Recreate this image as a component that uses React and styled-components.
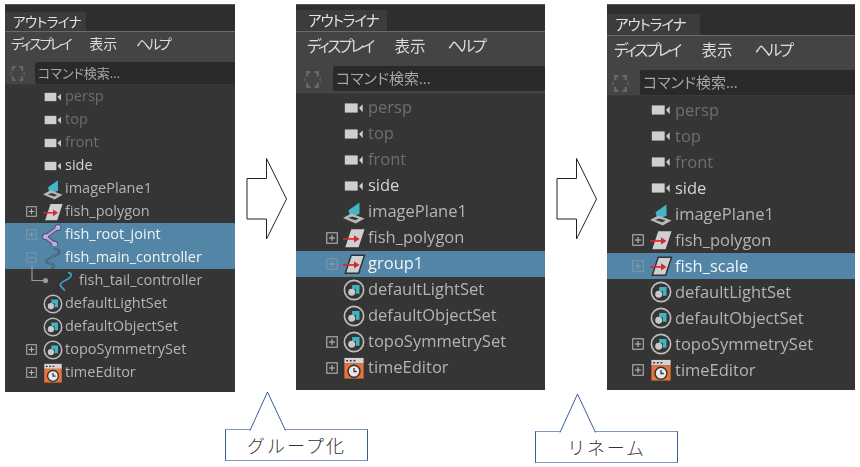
import React from 'react';
import styled, { createGlobalStyle } from 'styled-components';

const GlobalStyle = createGlobalStyle`
    html, body { margin: 0; padding: 0; background: #fff; }
    body { font-family: "Open Sans", "Noto Sans CJK JP", sans-serif; }
`;

const Page = styled.div`
    width: 860px;
    height: 467px;
    overflow: hidden;
`;

const TopRow = styled.div`
    display: flex;
    align-items: flex-start;
    height: 388px;
    padding: 4px 0 0 5px;
`;

const Panel = styled.div`
    flex: none;
    width: ${p => p.$width}px;
    height: ${p => p.$height}px;
    background: #353535;
    border-top: 1px solid #555;
    box-sizing: border-box;
    overflow: hidden;
    filter: blur(0.35px);
`;

const TabBar = styled.div`
    height: ${p => p.$height}px;
    display: flex;
    align-items: flex-end;
    background: #2e2e2e;
    border-bottom: 1px solid #6a6a6a;
`;

const Tab = styled.div`
    width: ${p => p.$width}px;
    height: ${p => p.$height}px;
    line-height: ${p => p.$line}px;
    padding-left: ${p => p.$inset}px;
    box-sizing: border-box;
    background: #3c3c3c;
    color: #e2e2e2;
    font-size: ${p => p.$font}px;
    letter-spacing: ${p => p.$kern}px;
    font-feature-settings: "palt";
    white-space: nowrap;
`;

const MenuBar = styled.div`
    height: ${p => p.$height}px;
    display: flex;
    align-items: center;
    padding-left: ${p => p.$inset}px;
    gap: ${p => p.$gap}px;
    background: #444;
    color: #dcdcdc;
    font-size: ${p => p.$font}px;
    font-feature-settings: "palt";
    white-space: nowrap;
`;

const Kana = styled.span`
    letter-spacing: -0.165em;
`;

const SearchRow = styled.div`
    height: ${p => p.$height}px;
    display: flex;
    align-items: flex-end;
    box-sizing: content-box;
    background: #444;
    border-bottom: 1px solid #3a3a3a;
`;

const SearchHandle = styled.svg`
    flex: none;
    width: ${p => p.$size}px;
    height: ${p => p.$size}px;
    margin: 0 ${p => p.$right}px ${p => p.$pad + 2}px ${p => p.$left}px;
`;

const SearchInput = styled.div`
    flex: 1;
    height: ${p => p.$height}px;
    line-height: ${p => p.$height}px;
    margin-bottom: ${p => p.$pad}px;
    padding-left: 3px;
    background: #2a2a2a;
    border-radius: 2px 0 0 2px;
    color: #a6a6a6;
    font-size: ${p => p.$font}px;
    font-feature-settings: "palt";
    white-space: nowrap;
`;

const List = styled.div`
    padding-top: ${p => p.$top}px;
`;

const Row = styled.div`
    position: relative;
    height: ${p => p.$height}px;
    display: flex;
    align-items: center;
    background: ${p => (p.$selected ? '#5285a6' : 'transparent')};
`;

const ExpandSlot = styled.div`
    flex: none;
    width: ${p => p.$width}px;
    display: flex;
    justify-content: flex-end;
    padding-right: ${p => p.$gap}px;
    box-sizing: border-box;
`;

const ExpandBox = styled.svg`
    display: block;
    width: ${p => p.$size}px;
    height: ${p => p.$size}px;
    opacity: ${p => (p.$dim ? 0.45 : 1)};
`;

const IconSlot = styled.div`
    flex: none;
    width: ${p => p.$width}px;
    height: ${p => p.$width}px;
    margin-right: ${p => p.$gap}px;
    svg { display: block; width: 100%; height: 100%; overflow: visible; }
`;

const Label = styled.span`
    position: relative;
    top: ${p => p.$lift}px;
    font-size: ${p => p.$font}px;
    line-height: 1;
    white-space: nowrap;
    color: ${p => (p.$selected ? '#eef4f7' : p.$muted ? '#6e6e6e' : p.$bright ? '#d4d4d4' : '#b4b4b4')};
`;

const TreeLine = styled.svg`
    position: absolute;
    left: 26px;
    top: -4px;
    width: 26px;
    height: 26px;
    overflow: visible;
`;

const ArrowSlot = styled.div`
    flex: none;
    width: ${p => p.$width}px;
    padding: 153px 0 0 ${p => p.$left}px;
    box-sizing: border-box;
`;

const BlockArrow = styled.svg`
    display: block;
    width: 42px;
    height: 83px;
`;

const BottomRow = styled.div`
    display: flex;
    align-items: flex-start;
    margin-top: 37px;
    padding-left: 225px;
`;

const Callout = styled.div`
    position: relative;
    flex: none;
    width: 143px;
    height: 32px;
    box-sizing: border-box;
    margin: ${p => p.$top}px ${p => p.$right}px 0 0;
    border: 1px solid #8095c2;
    border-left-color: #3d5c99;
    border-right-color: #3d5c99;
    display: flex;
    align-items: center;
    justify-content: center;
    color: #333;
    font-family: "Noto Sans CJK JP", sans-serif;
    font-size: 18px;
    font-weight: 300;
    letter-spacing: ${p => p.$spacing}px;
`;

const CalloutTip = styled.svg`
    position: absolute;
    left: ${p => p.$left}px;
    bottom: calc(100% - 1px);
    width: 38px;
    height: 40px;
`;

const Camera = () => (
    <svg viewBox="0 0 24 24">
        <rect x="2" y="7" width="14" height="10" fill="#cfcfcf" />
        <path d="M17.5 12 L21.5 8 V16.5 Z" fill="#cfcfcf" />
    </svg>
);

const ImagePlane = () => (
    <svg viewBox="0 0 24 24">
        <path d="M6 10 L18 1.5 V14 L8 18 Z" fill="#45b4c4" />
        <path d="M0 18.5 L9 13.5 L23.5 19 L14 24.5 Z M6 18.5 L9.5 16.5 L17 19.2 L13.5 21 Z" fill="#b8b8b8" fillRule="evenodd" />
    </svg>
);

const Transform = ({ selected }) => (
    <svg viewBox="0 0 24 24">
        <path d="M9 2.5 H23.5 L17 22 H2.5 Z" fill="#d0d0d0" stroke={selected ? '#333' : 'none'} strokeWidth="1.6" />
        <path d="M0 13 H13" stroke="#d8272e" strokeWidth="1.8" />
        <path d="M12 9 L18 13 L12 17 Z" fill="#d8272e" />
    </svg>
);

const Joint = () => (
    <svg viewBox="0 0 24 24">
        <path d="M18 3 L3 14 L14 23" fill="none" stroke="#3d4f5c" strokeWidth="5" strokeLinecap="round" strokeLinejoin="round" />
        <circle cx="18" cy="3" r="4" fill="#3d4f5c" />
        <circle cx="14" cy="23" r="4" fill="#3d4f5c" />
        <circle cx="3" cy="14" r="4" fill="#3d4f5c" />
        <path d="M18 3 L3 14 L14 23" fill="none" stroke="#b79ae0" strokeWidth="3" strokeLinecap="round" strokeLinejoin="round" />
        <circle cx="18" cy="3" r="3" fill="#c2a8ea" />
        <circle cx="14" cy="23" r="3" fill="#c2a8ea" />
        <circle cx="3" cy="14" r="3" fill="#c2a8ea" />
    </svg>
);

const CURVE = 'M14 1 C19 2 22 5 17 8 C12 11 3 12 4 16 C5 19 13 18 13 21 C13 22.5 12 23.5 11 24';

const CurveSolid = () => (
    <svg viewBox="0 0 24 24">
        <path d={CURVE} fill="none" stroke="#2b4a5f" strokeWidth="2.4" strokeLinecap="round" />
        <path d={CURVE} fill="none" stroke="#8fb0c6" strokeWidth="0.8" strokeLinecap="round" />
    </svg>
);

const CurveBlue = () => (
    <svg viewBox="0 0 24 24">
        <path d="M14 2 C18 3 18 6 14 9 C9 12 3 14 4 17 C5 20 8 21 9 23" fill="none" stroke="#3e9ec4" strokeWidth="2.2" strokeLinecap="round" />
    </svg>
);

const SetIcon = () => (
    <svg viewBox="0 0 24 24">
        <circle cx="12" cy="12" r="10.5" fill="#353535" stroke="#bdbdbd" strokeWidth="1.8" />
        <path d="M10 6.5 H18 V16 H14 V11 H10 Z" fill="#3fb4c0" />
        <circle cx="9.5" cy="14.5" r="3.8" fill="#c8c8c8" />
    </svg>
);

const TimeIcon = () => (
    <svg viewBox="0 0 24 24">
        <rect x="1.5" y="1" width="21" height="6" fill="#d4d4d4" />
        <path d="M3.5 4 H5.5 M7.5 4 H9.5 M11.5 4 H13.5" stroke="#333" strokeWidth="1.6" />
        <rect x="1.5" y="7" width="21" height="16.5" fill="#e9733a" />
        <circle cx="12" cy="15.5" r="6.5" fill="#e8e8e8" stroke="#333" strokeWidth="1.6" />
        <path d="M12 12 V15.8 H15" fill="none" stroke="#333" strokeWidth="1.4" />
    </svg>
);

const ICONS = {
    camera: Camera,
    plane: ImagePlane,
    transform: Transform,
    joint: Joint,
    curve: CurveSolid,
    tail: CurveBlue,
    set: SetIcon,
    time: TimeIcon,
};

const groupRows = name => [
    { name: 'persp', icon: 'camera', muted: true },
    { name: 'top', icon: 'camera', muted: true },
    { name: 'front', icon: 'camera', muted: true },
    { name: 'side', icon: 'camera', bright: true },
    { name: 'imagePlane1', icon: 'plane' },
    { name: 'fish_polygon', icon: 'transform', box: '+' },
    { name, icon: 'transform', box: '+', selected: true },
    { name: 'defaultLightSet', icon: 'set' },
    { name: 'defaultObjectSet', icon: 'set' },
    { name: 'topoSymmetrySet', icon: 'set', box: '+' },
    { name: 'timeEditor', icon: 'time', box: '+' },
];

const firstRows = [
    { name: 'persp', icon: 'camera', muted: true },
    { name: 'top', icon: 'camera', muted: true },
    { name: 'front', icon: 'camera', muted: true },
    { name: 'side', icon: 'camera', bright: true },
    { name: 'imagePlane1', icon: 'plane' },
    { name: 'fish_polygon', icon: 'transform', box: '+' },
    { name: 'fish_root_joint', icon: 'joint', box: '+', selected: true },
    { name: 'fish_main_controller', icon: 'curve', box: '-', selected: true },
    { name: 'fish_tail_controller', icon: 'tail', child: true },
    { name: 'defaultLightSet', icon: 'set' },
    { name: 'defaultObjectSet', icon: 'set' },
    { name: 'topoSymmetrySet', icon: 'set', box: '+' },
    { name: 'timeEditor', icon: 'time', box: '+' },
];

const Expand = ({ type, size, dim }) => (
    <ExpandBox $size={size} $dim={dim} viewBox="0 0 12 12">
        <rect x="0.75" y="0.75" width="10.5" height="10.5" fill="none" stroke="#a8a8a8" strokeWidth="1.2" />
        <path d="M3 6 H9" stroke="#b4b4b4" strokeWidth="1.2" />
        {type === '+' && <path d="M6 3 V9" stroke="#b4b4b4" strokeWidth="1.2" />}
    </ExpandBox>
);

const Outliner = ({ c, rows }) => (
    <Panel $width={c.width} $height={c.height}>
        <TabBar $height={c.barH}>
            <Tab $width={c.tabW} $height={c.tabH} $line={c.tabLine} $inset={c.tabInset} $font={c.tabFont} $kern={c.tabKern}>アウトライナ</Tab>
        </TabBar>
        <MenuBar $height={c.menuH} $inset={c.menuInset} $gap={c.menuGap} $font={c.menuFont}>
            <Kana>ディスプレイ</Kana>
            <span>表示</span>
            <Kana>ヘルプ</Kana>
        </MenuBar>
        <SearchRow $height={c.searchH}>
            <SearchHandle $size={c.handle} $left={c.handleLeft} $right={c.handleRight} $pad={c.inputPad} viewBox="0 0 18 18">
                <path d="M3 1 H7 V3 H5 V6 H3 Z M11 1 H15 V6 H13 V3 H11 Z M3 12 H5 V15 H7 V17 H3 Z M13 12 H15 V17 H11 V15 H13 Z" fill="#6a6a6a" />
                <path d="M1 6 L3 9 L1 12 Z M17 6 L15 9 L17 12 Z" fill="#5c5c5c" />
            </SearchHandle>
            <SearchInput $height={c.inputH} $pad={c.inputPad} $font={c.searchFont}>コマンド検索...</SearchInput>
        </SearchRow>
        <List $top={c.listTop}>
            {rows.map(r => {
                const Icon = ICONS[r.icon];
                return (
                    <Row key={r.name} $height={c.rowH} $selected={r.selected}>
                        {r.child && (
                            <TreeLine viewBox="0 0 26 26">
                                <path d="M1 0 V15.5 H14" fill="none" stroke="#9a9a9a" strokeWidth="1.2" />
                                <circle cx="14.5" cy="15.5" r="2.6" fill="#9a9a9a" />
                            </TreeLine>
                        )}
                        <ExpandSlot $width={r.child ? c.slotW + 14 : c.slotW} $gap={c.slotGap}>
                            {r.box && <Expand type={r.box} size={c.box} dim={r.selected} />}
                        </ExpandSlot>
                        <IconSlot $width={c.icon} $gap={c.iconGap}>
                            <Icon selected={r.selected} />
                        </IconSlot>
                        <Label $font={c.font} $lift={c.lift} $selected={r.selected} $muted={r.muted} $bright={r.bright}>{r.name}</Label>
                    </Row>
                );
            })}
        </List>
    </Panel>
);

const first = {
    width: 230, height: 388, barH: 26, tabW: 81, tabH: 19, tabLine: 21, tabInset: 8, tabFont: 13.5, tabKern: -0.5,
    menuH: 22, menuInset: 6, menuGap: 19, menuFont: 14,
    searchH: 30, handle: 17, handleLeft: 4, handleRight: 9, inputH: 22, inputPad: 0, searchFont: 13,
    listTop: 0, rowH: 23, slotW: 38, slotGap: 6, box: 11, icon: 20, iconGap: 2, font: 14.5, lift: 0,
};

const second = {
    width: 249, height: 386, barH: 26, tabW: 91, tabH: 21, tabLine: 21, tabInset: 12, tabFont: 14.5, tabKern: -1,
    menuH: 26, menuInset: 11, menuGap: 22, menuFont: 15.5,
    searchH: 35, handle: 19, handleLeft: 7, handleRight: 11, inputH: 25, inputPad: 2, searchFont: 15,
    listTop: 1, rowH: 26, slotW: 47, slotGap: 5, box: 12, icon: 22, iconGap: 3, font: 16.5, lift: -1,
};

const third = {
    ...second, width: 248, barH: 30, tabW: 93, tabInset: 8,
    menuH: 26, menuInset: 7, searchH: 33, inputPad: 0, handleLeft: 4, handleRight: 10, slotW: 43, slotGap: 6, lift: 0,
};

const Arrow = () => (
    <BlockArrow viewBox="0 0 42 83">
        <path d="M1 21.5 H20.5 V1.5 L40.5 42 L20.5 82 V62 H1 Z" fill="#fff" stroke="#222" strokeWidth="1" />
    </BlockArrow>
);

const Tip = ({ left }) => (
    <CalloutTip $left={left} viewBox="0 0 38 40">
        <path d="M1 39.5 L18.5 1 L36.5 39.5" fill="#fff" stroke="#3d5c99" strokeWidth="1" />
    </CalloutTip>
);

export default function App() {
    return (
        <Page>
            <GlobalStyle />
            <TopRow>
                <Outliner c={first} rows={firstRows} />
                <ArrowSlot $width={61} $left={11}><Arrow /></ArrowSlot>
                <Outliner c={second} rows={groupRows('group1')} />
                <ArrowSlot $width={62} $left={11}><Arrow /></ArrowSlot>
                <Outliner c={third} rows={groupRows('fish_scale')} />
            </TopRow>
            <BottomRow>
                <Callout $top={0} $right={167} $spacing={2}>
                    グループ化
                    <Tip left={23} />
                </Callout>
                <Callout $top={2} $right={0} $spacing={1.7}>
                    リネーム
                    <Tip left={23} />
                </Callout>
            </BottomRow>
        </Page>
    );
}
